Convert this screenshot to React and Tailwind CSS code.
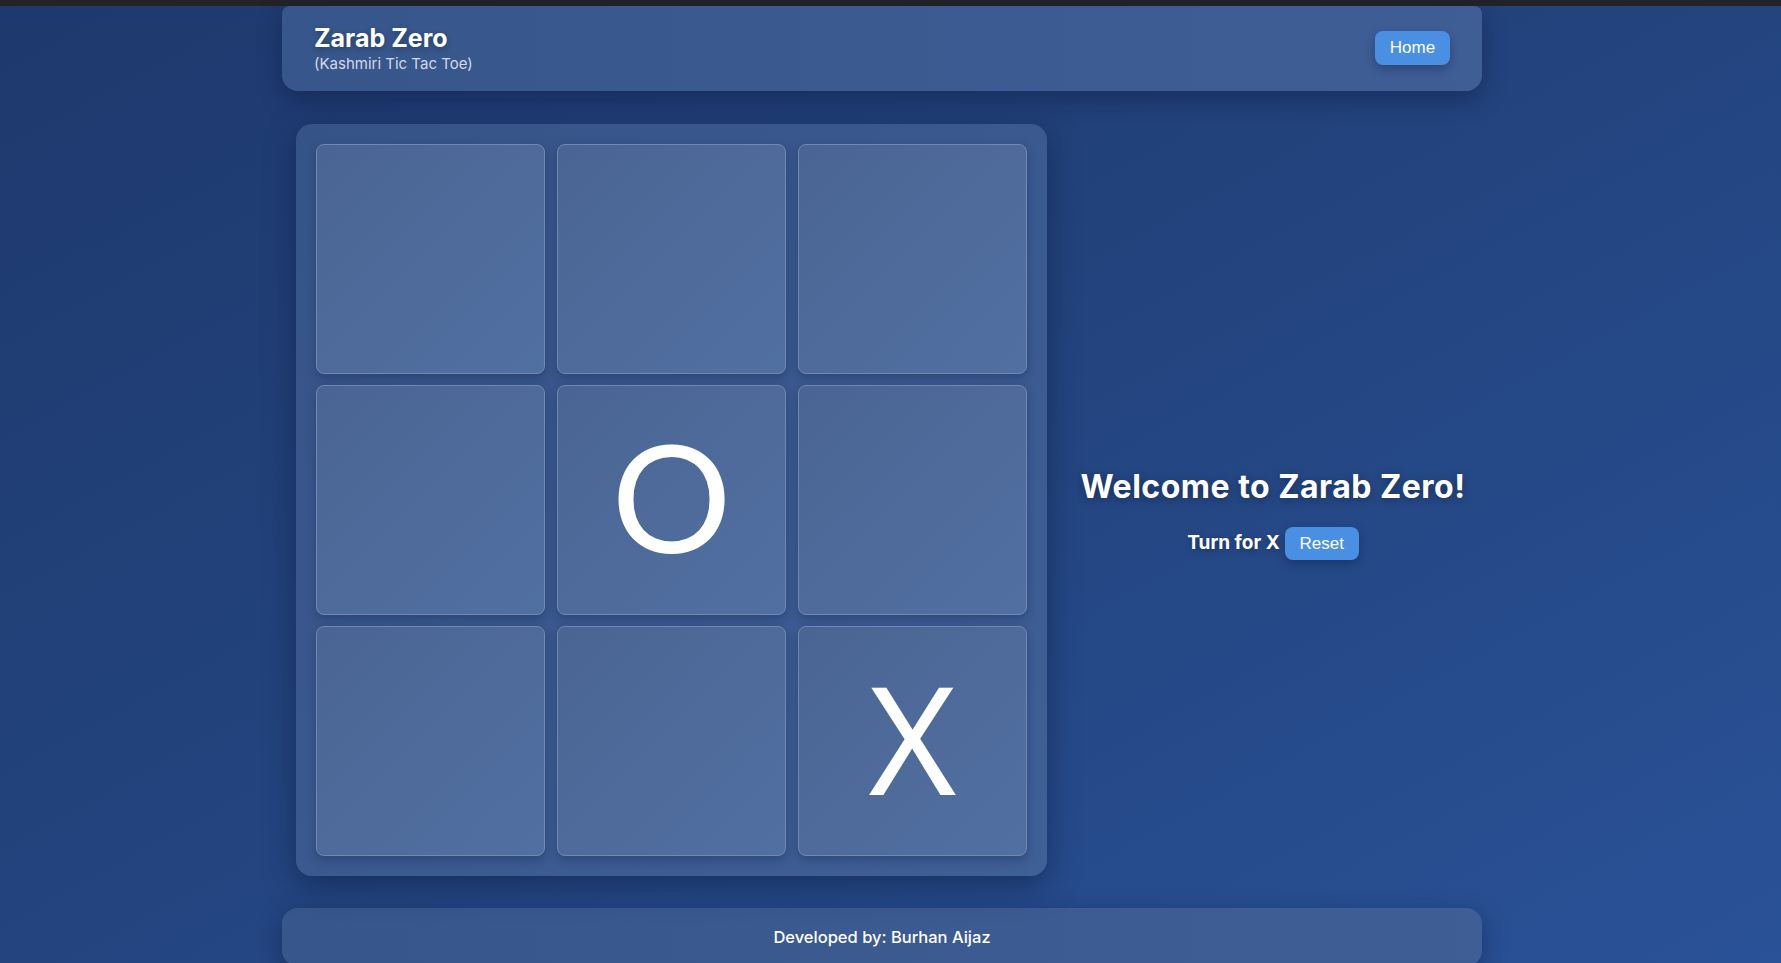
import React, { useState } from 'react';

const EMPTY = ['', '', '', '', 'O', '', '', '', 'X'];

// Page shell: dark strip on top, then header, board + welcome panel, footer
export default function App() {
  const [cells, setCells] = useState(EMPTY);
  const [turn, setTurn] = useState('X');

  const play = (i) => {
    if (cells[i]) return;
    const next = [...cells];
    next[i] = turn;
    setCells(next);
    setTurn(turn === 'X' ? 'O' : 'X');
  };

  const reset = () => {
    setCells(Array(9).fill(''));
    setTurn('X');
  };

  return (
    <div
      className="min-h-[963px] w-full bg-gradient-to-br from-[#1e396d] via-[#23447f] to-[#2a5298] text-white"
      style={{ fontFamily: 'Inter, "Liberation Sans", sans-serif' }}
    >
      <div className="h-[6px] bg-[#232326]" />

      <div className="ml-[282px] w-[1200px]">
        {/* Header */}
        <header className="flex h-[85px] items-center justify-between rounded-b-2xl rounded-t-lg bg-gradient-to-r from-[#37568b] to-[#3f5e96] px-8 shadow-[0_8px_24px_rgba(10,25,60,0.45)]">
          <div className="flex flex-col pb-[1px]">
            <h1 className="text-[25px] font-bold leading-[30px] [text-shadow:0_2px_6px_rgba(0,0,0,0.3)]">
              Zarab Zero
            </h1>
            <p className="mt-[2px] text-[15px] leading-[18px] text-[#d3d9e8]">(Kashmiri Tic Tac Toe)</p>
          </div>
          <button
            className="mb-[2px] h-[34px] w-[75px] rounded-lg bg-[#4a90e2] text-[17px] text-white shadow-[0_4px_10px_rgba(10,25,60,0.35)]"
            style={{ fontFamily: '"Liberation Sans", Arial, sans-serif' }}
          >
            Home
          </button>
        </header>

        {/* Main */}
        <main className="mt-[33px] flex">
          <div className="ml-[14px] rounded-2xl bg-gradient-to-br from-[#365387] to-[#3f5f97] p-5 shadow-[0_10px_30px_rgba(10,25,60,0.5)]">
            <div className="grid grid-cols-[229px_229px_229px] grid-rows-[230px_230px_230px] gap-x-3 gap-y-[11px]">
              {cells.map((c, i) => (
                <button
                  key={i}
                  onClick={() => play(i)}
                  className="flex items-center justify-center rounded-lg border border-[#7088b3] bg-gradient-to-br from-[#4a6593] to-[#5170a2] text-white shadow-[0_4px_10px_rgba(10,25,60,0.3)]"
                >
                  {c === 'O' && (
                    <span className="pb-[10px] text-[150px] font-normal leading-none" style={{ fontFamily: 'Lato, sans-serif' }}>
                      O
                    </span>
                  )}
                  {c === 'X' && (
                    <span className="pb-[9px] text-[150px] font-normal leading-none" style={{ fontFamily: '"Noto Sans", sans-serif' }}>
                      X
                    </span>
                  )}
                </button>
              ))}
            </div>
          </div>

          <div className="flex flex-1 flex-col items-center justify-center pl-[17px] pt-[28px]">
            <h2 className="text-[32px] font-bold leading-[38px] tracking-[0.5px] [text-shadow:0_2px_8px_rgba(0,0,0,0.35)]">
              Welcome to Zarab Zero!
            </h2>
            <div className="mt-[21px] flex items-center gap-[5px]">
              <span className="text-[19px] font-bold [text-shadow:0_2px_6px_rgba(0,0,0,0.3)]">Turn for {turn}</span>
              <button
                onClick={reset}
                className="h-[33px] w-[74px] rounded-lg bg-[#4a90e2] text-[17px] text-white shadow-[0_4px_10px_rgba(10,25,60,0.35)]"
                style={{ fontFamily: '"Liberation Sans", Arial, sans-serif' }}
              >
                Reset
              </button>
            </div>
          </div>
        </main>

        {/* Footer */}
        <footer className="mt-[32px] flex h-[58px] items-center justify-center rounded-2xl bg-gradient-to-r from-[#37568b] to-[#3f5e96] shadow-[0_8px_24px_rgba(10,25,60,0.45)]">
          <p className="text-[16.5px] font-medium">Developed by: Burhan Aijaz</p>
        </footer>
      </div>
    </div>
  );
}
